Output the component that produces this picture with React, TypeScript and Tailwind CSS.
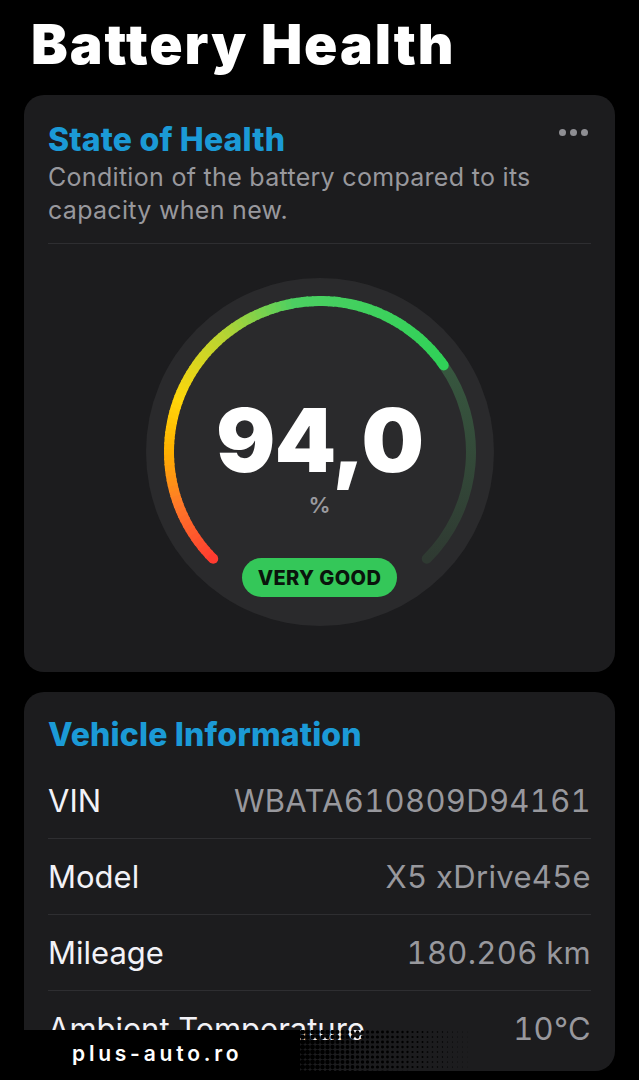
import React from "react";

const font = { fontFamily: "Inter, 'Noto Sans', sans-serif" };

const CX = 174;
const CY = 174;
const R = 151;

const polar = (deg: number) => {
  const a = (deg * Math.PI) / 180;
  return [CX + R * Math.sin(a), CY - R * Math.cos(a)];
};

const arcPath = (from: number, to: number) => {
  const [x1, y1] = polar(from);
  const [x2, y2] = polar(to);
  const large = to - from > 180 ? 1 : 0;
  return `M ${x1} ${y1} A ${R} ${R} 0 ${large} 1 ${x2} ${y2}`;
};

// colour stops along the arc, angle from top clockwise
const stops: [number, number[]][] = [
  [-135, [255, 59, 48]],
  [-110, [255, 122, 40]],
  [-90, [255, 176, 0]],
  [-70, [255, 214, 10]],
  [-40, [184, 212, 50]],
  [-10, [76, 208, 98]],
  [55, [48, 209, 88]],
];

const colorAt = (deg: number) => {
  for (let i = 0; i < stops.length - 1; i++) {
    const [a, ca] = stops[i];
    const [b, cb] = stops[i + 1];
    if (deg >= a && deg <= b) {
      const t = (deg - a) / (b - a);
      const c = ca.map((v, k) => Math.round(v + (cb[k] - v) * t));
      return `rgb(${c[0]},${c[1]},${c[2]})`;
    }
  }
  return "rgb(48,209,88)";
};

const Gauge = () => {
  const segs = [];
  for (let d = -135; d < 55; d += 2) {
    segs.push(
      <path
        key={d}
        d={arcPath(d, Math.min(d + 2.6, 55))}
        stroke={colorAt(d + 1)}
        strokeWidth={10}
        fill="none"
      />
    );
  }
  const [sx, sy] = polar(-135);
  const [ex, ey] = polar(55);
  return (
    <div className="relative w-[348px] h-[348px] rounded-full bg-[#2a2a2c]">
      <svg className="absolute inset-0" width="348" height="348" viewBox="0 0 348 348">
        <defs>
          <linearGradient id="dim" x1="0" y1="0" x2="0" y2="1">
            <stop offset="0" stopColor="#37573f" />
            <stop offset="1" stopColor="#2f3a32" />
          </linearGradient>
        </defs>
        <path d={arcPath(55, 135)} stroke="url(#dim)" strokeWidth={10} strokeLinecap="round" fill="none" />
        {segs}
        <circle cx={sx} cy={sy} r={5} fill="rgb(255,59,48)" />
        <circle cx={ex} cy={ey} r={5} fill="rgb(48,209,88)" />
      </svg>
      <div className="absolute inset-0 flex flex-col items-center">
        <div className="pt-[118px] text-[88px] leading-none font-black text-white tracking-[-0.01em]">94,0</div>
        <div className="mt-[10px] text-[22px] leading-none font-semibold text-[#9a9a9f]">%</div>
        <div className="mt-[42px] w-[155px] h-[39px] rounded-full bg-[#34c759] flex items-center justify-center text-[20px] font-extrabold text-[#0a140c] tracking-[0.02em]">
          VERY GOOD
        </div>
      </div>
    </div>
  );
};

const rows = [
  { label: "VIN", value: "WBATA610809D94161" },
  { label: "Model", value: "X5 xDrive45e" },
  { label: "Mileage", value: "180.206 km" },
  { label: "Ambient Temperature", value: "10°C" },
];

const Watermark = () => {
  const dots = [];
  for (let x = 0; x < 190; x += 5) {
    for (let y = 2; y < 50; y += 5) {
      const off = (y / 5) % 2 ? 2.5 : 0;
      const rr = 2.6 * (1 - (x + off) / 190);
      if (rr > 0.3) dots.push(<circle key={`${x}-${y}`} cx={x + off} cy={y} r={rr} fill="#000" />);
    }
  }
  return (
    <div className="absolute left-0 bottom-0 h-[50px] flex">
      <div className="w-[300px] h-full bg-black flex items-center pl-[72px] pb-[2px]">
        <span className="text-white text-[21px] font-semibold tracking-[0.18em]">plus-auto.ro</span>
      </div>
      <svg width="190" height="50" viewBox="0 0 190 50">
        {dots}
      </svg>
    </div>
  );
};

const App = () => {
  return (
    <div className="relative min-h-[1080px] bg-black overflow-hidden" style={font}>
      <div className="pt-[17px] pl-[31px] text-[55px] leading-none font-black text-white tracking-[0.035em]">
        Battery Health
      </div>

      {/* state of health */}
      <div className="relative mt-[23px] mx-[24px] rounded-[20px] bg-[#1c1c1e] px-[24px] pt-[27px] pb-[46px]">
        <div className="absolute top-[34px] right-[27px] flex gap-[4px]">
          <span className="w-[7px] h-[7px] rounded-full bg-[#8e8e93]" />
          <span className="w-[7px] h-[7px] rounded-full bg-[#8e8e93]" />
          <span className="w-[7px] h-[7px] rounded-full bg-[#8e8e93]" />
        </div>
        <div className="text-[32px] leading-[36px] font-extrabold text-[#1b9ad6] tracking-[0.005em]">State of Health</div>
        <div className="mt-[3px] text-[25px] leading-[33px] text-[#98989d] tracking-[0.012em] pr-[30px]">
          Condition of the battery compared to its capacity when new.
        </div>
        <div className="mt-[16px] border-t border-[#2e2e31]" />
        <div className="mt-[34px] flex justify-center">
          <Gauge />
        </div>
      </div>

      {/* vehicle information */}
      <div className="mt-[20px] mx-[24px] rounded-[20px] bg-[#1c1c1e] px-[24px] pt-[25px] pb-[5px]">
        <div className="text-[32px] leading-[36px] font-extrabold text-[#1b9ad6] tracking-[0.005em]">Vehicle Information</div>
        <div className="mt-[10px]">
          {rows.map((r, i) => (
            <div
              key={r.label}
              className={`flex justify-between items-center py-[19.5px] text-[31px] leading-[36px] ${
                i < rows.length - 1 ? "border-b border-[#2e2e31]" : ""
              }`}
            >
              <span className="text-[#f2f2f7]">{r.label}</span>
              <span className="text-[#98989d] tabular-nums tracking-[0.01em]">{r.value}</span>
            </div>
          ))}
        </div>
      </div>

      <Watermark />
    </div>
  );
};

export default App;
